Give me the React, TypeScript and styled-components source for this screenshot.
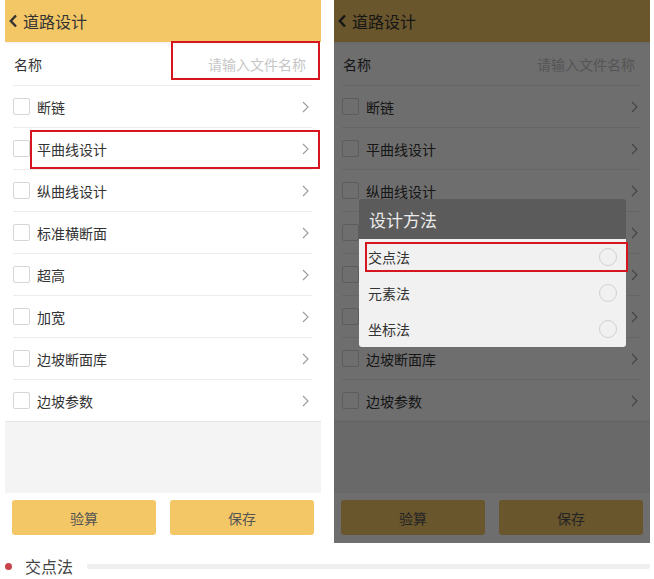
import React from 'react';
import styled, { createGlobalStyle } from 'styled-components';

const Global = createGlobalStyle`
  html, body { margin: 0; padding: 0; background: #fff; }
  body { font-family: "Noto Sans CJK SC", "Noto Sans", sans-serif; color: #333; }
`;

const Page = styled.div`
  width: 654px;
  height: 579px;
  display: flex;
  flex-direction: column;
  overflow: hidden;
`;

const Screens = styled.div`
  display: flex;
  gap: 13px;
  padding-left: 5px;
  height: 543px;
`;

const Phone = styled.div`
  position: relative;
  width: 316px;
  height: 543px;
  display: flex;
  flex-direction: column;
  background: #fff;
  overflow: hidden;
`;

const Header = styled.div`
  height: 42px;
  flex: none;
  background: #f3c766;
  display: flex;
  align-items: center;
  padding-left: 3px;
  gap: 5px;
  font-size: 16px;
  color: #333;
  box-shadow: 0 1px 2px rgba(0, 0, 0, 0.07);
  position: relative;
  z-index: 1;
`;

const NameRow = styled.div`
  position: relative;
  height: 43px;
  flex: none;
  display: flex;
  align-items: center;
  justify-content: space-between;
  padding: 0 15px 0 9px;
  font-size: 14px;
`;

const Placeholder = styled.span`
  color: #c6c6c6;
`;

const Item = styled.div`
  position: relative;
  height: 41px;
  flex: none;
  margin: 0 9px 0 8px;
  border-top: 1px solid #ececec;
  display: flex;
  align-items: center;
  font-size: 14px;
  color: #333;
`;

const Check = styled.span`
  width: 15px;
  height: 15px;
  border: 1px solid #d6d6d6;
  border-radius: 2px;
  background: #fff;
`;

const Label = styled.span`
  margin-left: 7px;
`;

const Arrow = styled.svg`
  margin-left: auto;
  margin-right: 3px;
`;

const Filler = styled.div`
  flex: 1;
  background: #f4f4f4;
  border-top: 1px solid #e6e6e6;
`;

const Footer = styled.div`
  height: 50px;
  flex: none;
  display: flex;
  gap: 14px;
  padding: 7px 7px 8px;
  box-sizing: border-box;
`;

const Button = styled.div`
  flex: 1;
  height: 35px;
  background: #f3c766;
  border-radius: 3px;
  display: flex;
  align-items: center;
  justify-content: center;
  font-size: 14px;
  color: #555;
`;

const Highlight = styled.div<{ $t: number; $l: number; $w: number; $h: number }>`
  position: absolute;
  top: ${p => p.$t}px;
  left: ${p => p.$l}px;
  width: ${p => p.$w}px;
  height: ${p => p.$h}px;
  border: 2px solid #d6161f;
  box-sizing: border-box;
  z-index: 5;
  pointer-events: none;
`;

const Overlay = styled.div`
  position: absolute;
  inset: 0;
  background: rgba(0, 0, 0, 0.57);
  z-index: 2;
`;

const Dialog = styled.div`
  position: absolute;
  top: 199px;
  left: 25px;
  width: 267px;
  z-index: 3;
  border-radius: 3px;
  overflow: visible;
`;

const DialogTitle = styled.div`
  height: 40px;
  background: #5b5b5b;
  color: #ececec;
  font-size: 17px;
  display: flex;
  align-items: center;
  padding-left: 10px;
  border-radius: 3px 3px 0 0;
`;

const DialogBody = styled.div`
  background: #f1f1f1;
  border-radius: 0 0 3px 3px;
`;

const Option = styled.div`
  position: relative;
  height: 36px;
  display: flex;
  align-items: center;
  justify-content: space-between;
  padding: 0 9px;
  font-size: 14px;
  color: #333;
`;

const Radio = styled.span`
  width: 16px;
  height: 16px;
  border: 1px solid #d2d2d2;
  border-radius: 50%;
`;

const Caption = styled.div`
  height: 36px;
  padding-top: 10px;
  box-sizing: border-box;
  display: flex;
  align-items: flex-start;
`;

const CaptionInner = styled.div`
  height: 26px;
  width: 100%;
  display: flex;
  align-items: center;
`;

const Dot = styled.span`
  width: 7px;
  height: 7px;
  border-radius: 50%;
  background: #c8434b;
  margin-left: 5px;
`;

const CaptionText = styled.span`
  margin-left: 13px;
  font-size: 16px;
  color: #444;
`;

const Rule = styled.span`
  flex: 1;
  height: 5px;
  background: #efefef;
  margin: 0 4px 0 14px;
  border-radius: 2px;
`;

const items = ['断链', '平曲线设计', '纵曲线设计', '标准横断面', '超高', '加宽', '边坡断面库', '边坡参数'];

const Back = () => (
  <svg width="10" height="14" viewBox="0 0 10 14">
    <path d="M8 1.5 L2.8 7 L8 12.5" fill="none" stroke="#333" strokeWidth="2.4" />
  </svg>
);

const Chevron = () => (
  <Arrow width="7" height="12" viewBox="0 0 7 12">
    <path d="M1 1 L6 6 L1 11" fill="none" stroke="#9a9a9a" strokeWidth="1.1" />
  </Arrow>
);

const Screen: React.FC<{ annotated?: boolean; children?: React.ReactNode }> = ({ annotated, children }) => (
  <Phone>
    <Header>
      <Back />
      <span>道路设计</span>
    </Header>
    <NameRow>
      <span>名称</span>
      <Placeholder>请输入文件名称</Placeholder>
      {annotated && <Highlight $t={-1} $l={166} $w={149} $h={39} />}
    </NameRow>
    {items.map(name => (
      <Item key={name}>
        <Check />
        <Label>{name}</Label>
        <Chevron />
        {annotated && name === '平曲线设计' && <Highlight $t={2} $l={17} $w={290} $h={39} />}
      </Item>
    ))}
    <Filler />
    <Footer>
      <Button>验算</Button>
      <Button>保存</Button>
    </Footer>
    {children}
  </Phone>
);

export default function App() {
  return (
    <Page>
      <Global />
      <Screens>
        <Screen annotated />
        <Screen>
          <Overlay />
          <Dialog>
            <DialogTitle>设计方法</DialogTitle>
            <DialogBody>
              <Option>
                <span>交点法</span>
                <Radio />
                <Highlight $t={3} $l={6} $w={263} $h={30} />
              </Option>
              <Option>
                <span>元素法</span>
                <Radio />
              </Option>
              <Option>
                <span>坐标法</span>
                <Radio />
              </Option>
            </DialogBody>
          </Dialog>
        </Screen>
      </Screens>
      <Caption>
        <CaptionInner>
          <Dot />
          <CaptionText>交点法</CaptionText>
          <Rule />
        </CaptionInner>
      </Caption>
    </Page>
  );
}
